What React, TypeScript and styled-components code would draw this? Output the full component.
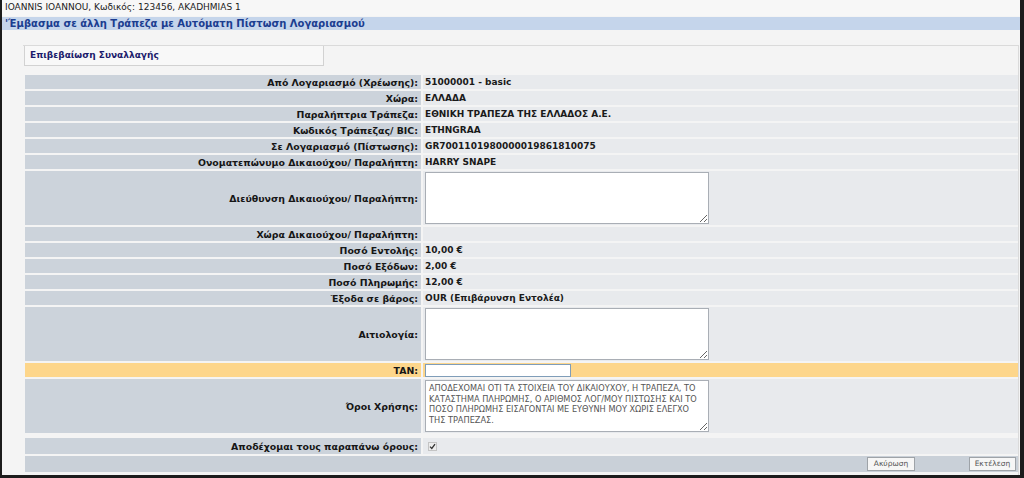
import React from "react";
import styled, { createGlobalStyle } from "styled-components";

const GlobalStyle = createGlobalStyle`
  html, body { margin: 0; padding: 0; background: #f4f4f4; }
  * { box-sizing: border-box; }
`;

const Frame = styled.div`
  width: 1024px;
  height: 478px;
  overflow: hidden;
  background: #f4f4f4;
  border-left: 2px solid #1c1c1c;
  border-right: 4px solid #1c1c1c;
  border-bottom: 3px solid #1c1c1c;
  font-family: "DejaVu Sans", Verdana, sans-serif;
  color: #1e1e1e;
`;

const TopLine = styled.div`
  height: 16px;
  line-height: 15px;
  padding-left: 3px;
  font-size: 9px;
  background: #f7f7f7;
  color: #222;
`;

const TitleBar = styled.div`
  margin-top: 1px;
  height: 13px;
  line-height: 13px;
  padding-left: 3px;
  background: #c5d5eb;
  color: #1b3d90;
  font-size: 10px;
  font-weight: bold;
`;

const Panel = styled.div`
  margin: 15px 1px 0 21px;
  border-top: 1px solid #dadada;
  border-right: 1px solid #dadada;
  height: 431px;
`;

const PanelHeader = styled.div`
  margin-left: 1px;
  width: 300px;
  height: 20px;
  line-height: 19px;
  padding-left: 5px;
  border: 1px solid #d2d2d2;
  border-top: none;
  background: #f8f8f8;
  color: #1c1c6c;
  font-size: 9px;
  font-weight: bold;
`;

const Table = styled.table<{ $top: number }>`
  margin-top: ${(p) => p.$top}px;
  width: 997px;
  margin-left: 0;
  border-collapse: separate;
  border-spacing: 2px;
  table-layout: fixed;
  font-size: 9px;
  font-weight: bold;
`;

const LabelCell = styled.td<{ $tone?: "tan"; $h?: number }>`
  width: 396px;
  height: ${(p) => p.$h ?? 14}px;
  padding: 0 3px 0 0;
  text-align: right;
  vertical-align: middle;
  background: ${(p) => (p.$tone === "tan" ? "#fdd68b" : "#ccd3db")};
  color: #161616;
  font-size: 9.4px;
  white-space: nowrap;
`;

const ValueCell = styled.td<{ $tone?: "tan"; $pad?: number }>`
  height: 14px;
  padding: ${(p) => p.$pad ?? 0}px 2px;
  vertical-align: middle;
  background: ${(p) => (p.$tone === "tan" ? "#fdd68b" : "#e8eaed")};
  color: #1a1a1a;
  white-space: nowrap;
`;

const ButtonCell = styled.td`
  height: 16px;
  padding: 0 2px 0 0;
  background: #c9d0d8;
`;

const ButtonRow = styled.div`
  display: flex;
  justify-content: flex-end;
  gap: 54px;
`;

const Area = styled.textarea`
  display: block;
  width: 284px;
  height: 52px;
  margin: 0;
  padding: 2px 3px;
  border: 1px solid #a9aeb5;
  background: #fff;
  font-family: "DejaVu Sans", Verdana, sans-serif;
  font-size: 8.2px;
  line-height: 10.5px;
  color: #555;
  resize: both;
  overflow: hidden;
`;

const TanInput = styled.input`
  display: block;
  width: 146px;
  height: 13px;
  margin: 0;
  padding: 0 2px;
  border: 1px solid #7f9db9;
  background: #fff;
  outline: none;
`;

const CheckBox = styled.span`
  display: inline-flex;
  align-items: center;
  justify-content: center;
  width: 9px;
  height: 9px;
  margin-left: 3px;
  border: 1px solid #c4c4c4;
  background: #ededed;
  vertical-align: middle;
`;

const SmallButton = styled.button<{ $w: number }>`
  width: ${(p) => p.$w}px;
  height: 14px;
  padding: 0;
  border: 1px solid #9ea3a8;
  background: #f6f6f6;
  color: #555;
  font-family: "DejaVu Sans", Verdana, sans-serif;
  font-size: 7.5px;
  line-height: 12px;
`;

type Row = { label: string; value?: string; kind?: "area" };

const rows: Row[] = [
  { label: "Από Λογαριασμό (Χρέωσης):", value: "51000001 - basic" },
  { label: "Χώρα:", value: "ΕΛΛΑΔΑ" },
  { label: "Παραλήπτρια Τράπεζα:", value: "ΕΘΝΙΚΗ ΤΡΑΠΕΖΑ ΤΗΣ ΕΛΛΑΔΟΣ Α.Ε." },
  { label: "Κωδικός Τράπεζας/ BIC:", value: "ETHNGRAA" },
  { label: "Σε Λογαριασμό (Πίστωσης):", value: "GR7001101980000019861810075" },
  { label: "Ονοματεπώνυμο Δικαιούχου/ Παραλήπτη:", value: "HARRY SNAPE" },
  { label: "Διεύθυνση Δικαιούχου/ Παραλήπτη:", kind: "area" },
  { label: "Χώρα Δικαιούχου/ Παραλήπτη:", value: "" },
  { label: "Ποσό Εντολής:", value: "10,00 €" },
  { label: "Ποσό Εξόδων:", value: "2,00 €" },
  { label: "Ποσό Πληρωμής:", value: "12,00 €" },
  { label: "Έξοδα σε βάρος:", value: "OUR (Επιβάρυνση Εντολέα)" },
  { label: "Αιτιολογία:", kind: "area" },
];

const terms =
  "ΑΠΟΔΕΧΟΜΑΙ ΟΤΙ ΤΑ ΣΤΟΙΧΕΙΑ ΤΟΥ ΔΙΚΑΙΟΥΧΟΥ, Η ΤΡΑΠΕΖΑ, ΤΟ ΚΑΤΑΣΤΗΜΑ ΠΛΗΡΩΜΗΣ, Ο ΑΡΙΘΜΟΣ ΛΟΓ/ΜΟΥ ΠΙΣΤΩΣΗΣ ΚΑΙ ΤΟ ΠΟΣΟ ΠΛΗΡΩΜΗΣ ΕΙΣΑΓΟΝΤΑΙ ΜΕ ΕΥΘΥΝΗ ΜΟΥ ΧΩΡΙΣ ΕΛΕΓΧΟ ΤΗΣ ΤΡΑΠΕΖΑΣ.";

export default function App() {
  return (
    <>
      <GlobalStyle />
      <Frame>
        <TopLine>IOANNIS IOANNOU, Κωδικός: 123456, AKADHMIAS 1</TopLine>
        <TitleBar>'Έμβασμα σε άλλη Τράπεζα με Αυτόματη Πίστωση Λογαριασμού</TitleBar>
        <Panel>
          <PanelHeader>Επιβεβαίωση Συναλλαγής</PanelHeader>
          <Table $top={7}>
            <tbody>
              {rows.map((r) => (
                <tr key={r.label}>
                  <LabelCell>{r.label}</LabelCell>
                  {r.kind === "area" ? (
                    <ValueCell $pad={1}>
                      <Area />
                    </ValueCell>
                  ) : (
                    <ValueCell>{r.value}</ValueCell>
                  )}
                </tr>
              ))}
              <tr>
                <LabelCell $tone="tan">TAN:</LabelCell>
                <ValueCell $tone="tan">
                  <TanInput />
                </ValueCell>
              </tr>
              <tr>
                <LabelCell>Όροι Χρήσης:</LabelCell>
                <ValueCell $pad={1}>
                  <Area readOnly value={terms} />
                </ValueCell>
              </tr>
            </tbody>
          </Table>
          <Table $top={1}>
            <tbody>
              <tr>
                <LabelCell $h={16}>Αποδέχομαι τους παραπάνω όρους:</LabelCell>
                <ValueCell>
                  <CheckBox>
                    <svg width="7" height="7" viewBox="0 0 7 7">
                      <path d="M1 3.6 L2.8 5.4 L6 1.2" fill="none" stroke="#333" strokeWidth="1.3" />
                    </svg>
                  </CheckBox>
                </ValueCell>
              </tr>
              <tr>
                <ButtonCell colSpan={2}>
                  <ButtonRow>
                    <SmallButton $w={48}>Ακύρωση</SmallButton>
                    <SmallButton $w={47}>Εκτέλεση</SmallButton>
                  </ButtonRow>
                </ButtonCell>
              </tr>
            </tbody>
          </Table>
        </Panel>
      </Frame>
    </>
  );
}
